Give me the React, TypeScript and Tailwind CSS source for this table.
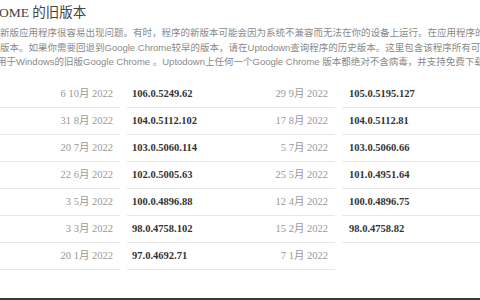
const rows = [
  { a: "6 10月 2022", v1: "106.0.5249.62", d2: "29 9月 2022", v2: "105.0.5195.127" },
  { a: "31 8月 2022", v1: "104.0.5112.102", d2: "17 8月 2022", v2: "104.0.5112.81" },
  { a: "20 7月 2022", v1: "103.0.5060.114", d2: "5 7月 2022", v2: "103.0.5060.66" },
  { a: "22 6月 2022", v1: "102.0.5005.63", d2: "25 5月 2022", v2: "101.0.4951.64" },
  { a: "3 5月 2022", v1: "100.0.4896.88", d2: "12 4月 2022", v2: "100.0.4896.75" },
  { a: "3 3月 2022", v1: "98.0.4758.102", d2: "15 2月 2022", v2: "98.0.4758.82" },
  { a: "20 1月 2022", v1: "97.0.4692.71", d2: "7 1月 2022", v2: "" },
];

const App = () => {
  return (
    <div
      className="w-[480px] h-[300px] overflow-hidden bg-white flex flex-col"
      style={{ fontFamily: '"Liberation Serif", "Noto Sans CJK SC", serif' }}
    >
      {/** Title, cut off at the left **/}
      <h2 className="h-[26px] leading-[26px] text-[13.5px] text-[#444] whitespace-nowrap -ml-[1px]">
        OME 的旧版本
      </h2>

      {/** Description **/}
      <div
        className="text-[9.5px] leading-[14.5px] text-[#8a8a8a] whitespace-nowrap overflow-hidden"
        style={{ fontFamily: '"Liberation Sans", "Noto Sans CJK SC", sans-serif' }}
      >
        <p>新版应用程序很容易出现问题。有时，程序的新版本可能会因为系统不兼容而无法在你的设备上运行。在应用程序的旧</p>
        <p>版本。如果你需要回退到Google Chrome较早的版本，请在Uptodown查询程序的历史版本。这里包含该程序所有可用</p>
        <p className="-ml-[3px]">用于Windows的旧版Google Chrome 。Uptodown上任何一个Google Chrome 版本都绝对不含病毒，并支持免费下载。</p>
      </div>

      {/** Version list **/}
      <div className="mt-[11.5px] grid grid-cols-[120px_208px_1fr] gap-x-[7px] text-[10.5px]">
        {rows.map((r, i) => (
          <div key={i} className="contents">
            <div className="h-[27px] border-b border-[#e8e8e8] flex items-center justify-end pr-[7px] text-[#999]">
              {r.a}
            </div>
            <div className="h-[27px] border-b border-[#e8e8e8] flex items-center justify-between pl-[5px] pr-[7px]">
              <span className="font-bold text-[#333]">{r.v1}</span>
              <span className="text-[#999]">{r.d2}</span>
            </div>
            {r.v2 ? (
              <div className="h-[27px] border-b border-[#e8e8e8] flex items-center pl-[7px] font-bold text-[#333]">
                {r.v2}
              </div>
            ) : (
              <div className="h-[27px]" />
            )}
          </div>
        ))}
      </div>

      <div className="flex-1" />
      <div className="h-[2px] bg-[#3a3a3a]" />
    </div>
  );
};

export default App;
